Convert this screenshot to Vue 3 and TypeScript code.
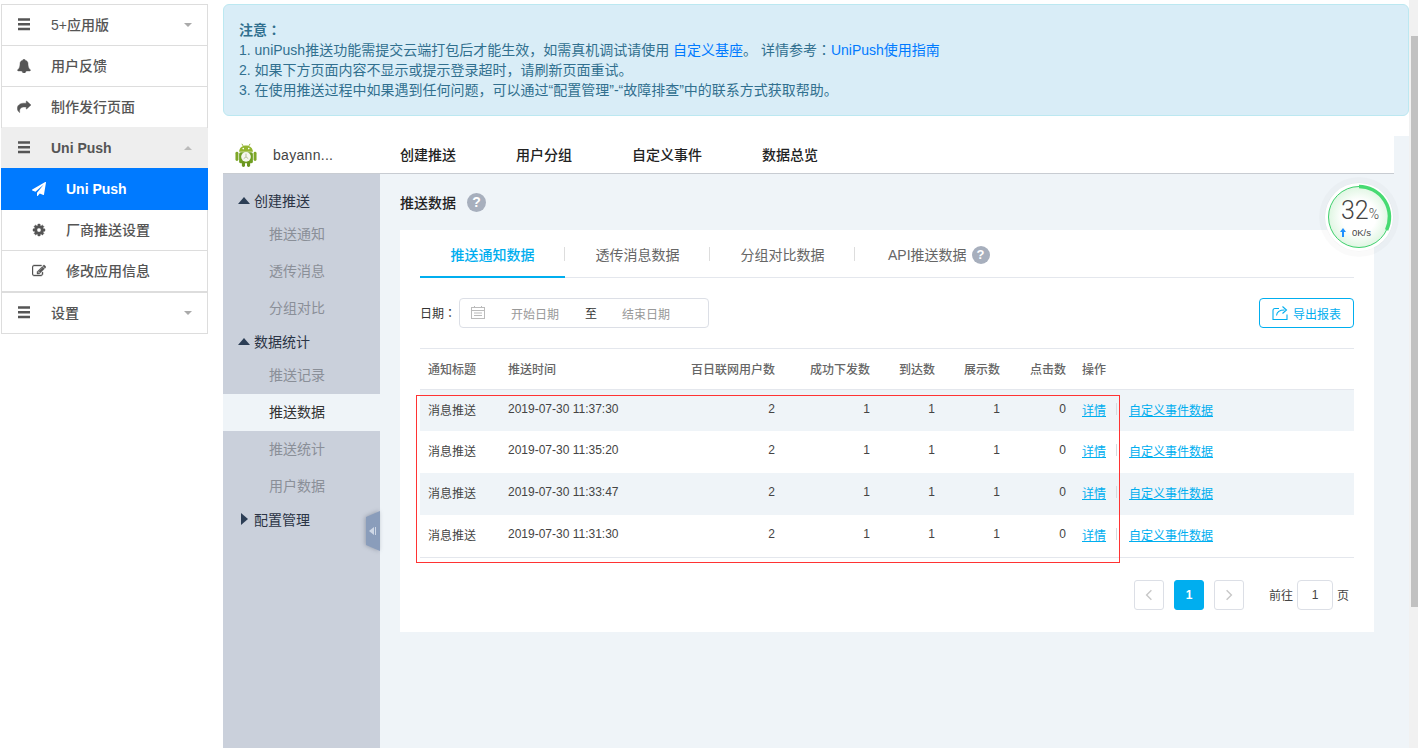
<script setup lang="ts">
const P = {
  bars: 'M128 26h1536v320h-1536zM128 627h1536v320h-1536zM128 1254h1536v320h-1536z',
  bell: 'M912 1696q0-16-16-16-59 0-101.500-42.500t-42.500-101.500q0-16-16-16t-16 16q0 73 51.500 124.500t124.500 51.500q16 0 16-16zm816-288q0 52-38 90t-90 38h-448q0 106-75 181t-181 75-181-75-75-181h-448q-52 0-90-38t-38-90q50-42 91-88t85-119.500 74.500-158.500 50-206 19.500-260q0-152 117-282.500t307-158.500q-8-19-8-39 0-40 28-68t68-28 68 28 28 68q0 20-8 39 190 28 307 158.500t117 282.500q0 139 19.500 260t50 206 74.500 158.500 85 119.500 91 88z',
  share: 'M1792 640L1240 140Q1180 100 1180 190V400H960C500 400 40 560 40 1100C40 1300 180 1480 300 1590C340 1620 370 1590 350 1550C290 1250 400 900 960 900H1180V1110Q1180 1190 1240 1150Z',
  send: 'M1764 11q33 24 27 64l-256 1536q-5 29-32 45-14 8-31 8-11 0-24-5l-453-185-242 295q-18 23-49 23-13 0-22-4-19-7-30.500-23.500t-11.500-36.500v-349l864-1059-1069 925-395-162q-37-14-40-55-2-40 32-59l1664-960q15-9 32-9 20 0 36 11z',
  cog: 'M1152 896q0-106-75-181t-181-75-181 75-75 181 75 181 181 75 181-75 75-181zm512-109v222q0 12-8 23t-20 13l-185 28q-19 54-39 91 35 50 107 138 10 12 10 25t-9 23q-27 37-99 108t-94 71q-12 0-26-9l-138-108q-44 23-91 38-16 136-29 186-7 28-36 28h-222q-14 0-24.500-8.500t-11.500-21.500l-28-184q-49-16-90-37l-141 107q-10 9-25 9-14 0-25-11-126-114-165-168-7-10-7-23 0-12 8-23 15-21 51-66.500t54-70.500q-27-50-41-99l-183-27q-13-2-21-12.500t-8-23.500v-222q0-12 8-23t19-13l186-28q14-46 39-92-40-57-107-138-10-12-10-24 0-10 9-23 26-36 98.500-107.500t94.500-71.500q13 0 26 10l138 107q44-23 91-38 16-136 29-186 7-28 36-28h222q14 0 24.500 8.500t11.500 21.500l28 184q49 16 90 37l142-107q9-9 24-9 13 0 25 10 129 119 165 170 7 8 7 22 0 12-8 23-15 21-51 66.500t-54 70.500q26 50 41 98l183 28q13 2 21 12.500t8 23.500z',
  edit: 'M888 1184l116-116-152-152-116 116v56h96v96h56zm440-720q-16-16-33 1l-350 350q-17 17-1 33t33-1l350-350q17-17 1-33zm80 594v190q0 119-84.500 203.500t-203.500 84.500h-832q-119 0-203.500-84.500t-84.500-203.500v-832q0-119 84.500-203.500t203.500-84.500h832q63 0 117 25 15 7 18 23 3 17-9 29l-49 49q-14 14-32 8-23-6-45-6h-832q-66 0-113 47t-47 113v832q0 66 47 113t113 47h832q66 0 113-47t47-113v-126q0-13 9-22l64-64q15-15 35-9t20 29zm-96-738l288 288-672 672h-288v-288zm444 132l-92 92-288-288 92-92q28-28 68-28t68 28l152 152q28 28 28 68t-28 68z'
}

interface Item { label: string; icon: string; sub?: boolean; caret?: 'up' | 'down'; cls?: string }
const menu: Item[] = [
  { label: '5+应用版', icon: P.bars, caret: 'down' },
  { label: '用户反馈', icon: P.bell },
  { label: '制作发行页面', icon: P.share, cls: 'before-open' },
  { label: 'Uni Push', icon: P.bars, caret: 'up', cls: 'open' },
  { label: 'Uni Push', icon: P.send, sub: true, cls: 'current' },
  { label: '厂商推送设置', icon: P.cog, sub: true },
  { label: '修改应用信息', icon: P.edit, sub: true },
  { label: '设置', icon: P.bars, caret: 'down', cls: 'last' }
]

const strokeFor = (d: string): number => (d === P.bars || d === P.send ? 0 : 50)

const navGroups = [
  { title: '创建推送', open: true, items: ['推送通知', '透传消息', '分组对比'] },
  { title: '数据统计', open: true, items: ['推送记录', '推送数据', '推送统计', '用户数据'] },
  { title: '配置管理', open: false, items: [] as string[] }
]

const topNav = ['创建推送', '用户分组', '自定义事件', '数据总览']
const tabs = ['推送通知数据', '透传消息数据', '分组对比数据']
const times = ['2019-07-30 11:37:30', '2019-07-30 11:35:20', '2019-07-30 11:33:47', '2019-07-30 11:31:30']
</script>

<template>
  <div class="page">
    <aside class="side">
      <div v-for="m in menu" :key="m.label + m.icon.length" class="row" :class="[m.cls, { sub: m.sub }]">
        <svg class="ico" viewBox="0 0 1792 1792"><path :d="m.icon" fill="currentColor" stroke="currentColor" :stroke-width="strokeFor(m.icon)" /></svg>
        <span class="row-label">{{ m.label }}</span>
        <i v-if="m.caret" class="caret" :class="m.caret"></i>
      </div>
    </aside>

    <main class="main">
      <section class="notice">
        <div class="notice-title">注意<span class="colon">：</span></div>
        <div>1. uniPush推送功能需提交云端打包后才能生效，如需真机调试请使用 <a class="nlink">自定义基座</a>。 详情参考<span class="colon">：</span><a class="nlink">UniPush使用指南</a></div>
        <div>2. 如果下方页面内容不显示或提示登录超时，请刷新页面重试。</div>
        <div>3. 在使用推送过程中如果遇到任何问题，可以通过“配置管理”-“故障排查”中的联系方式获取帮助。</div>
      </section>

      <section class="frame">
        <header class="top">
          <svg class="droid" viewBox="0 0 24 26">
            <line x1="7.500" y1="0.800" x2="9.500" y2="4" stroke="#8fb02f" stroke-width="1" />
            <line x1="16.500" y1="0.800" x2="14.500" y2="4" stroke="#8fb02f" stroke-width="1" />
            <path d="M4.500 9.500C4.500 5 8 2.500 12 2.500S19.500 5 19.500 9.500Z" fill="#93b52f" />
            <circle cx="9" cy="6" r="0.900" fill="#fff" /><circle cx="15" cy="6" r="0.900" fill="#fff" />
            <rect x="4.500" y="10" width="15" height="12" rx="2" fill="#6f9f22" />
            <rect x="0.500" y="9.500" width="3.200" height="10" rx="1.600" fill="#7fa728" />
            <rect x="20.300" y="9.500" width="3.200" height="10" rx="1.600" fill="#7fa728" />
            <rect x="7.500" y="20" width="3.400" height="6" rx="1.600" fill="#6b9520" />
            <rect x="13.100" y="20" width="3.400" height="6" rx="1.600" fill="#6b9520" />
            <circle cx="12" cy="15" r="5.300" fill="#f5f6ee" />
            <path d="M12 11.500V15L9.500 17M12 15L14.500 17" stroke="#a8b58a" stroke-width="0.900" fill="none" />
          </svg>
          <span class="appname">bayann...</span>
          <nav class="topnav"><a v-for="t in topNav" :key="t">{{ t }}</a></nav>
        </header>

        <div class="split">
          <nav class="leftnav">
            <template v-for="g in navGroups" :key="g.title">
              <div class="group"><i class="tri" :class="g.open ? 'tri-up' : 'tri-right'"></i>{{ g.title }}</div>
              <div v-for="it in g.items" :key="it" class="child" :class="{ active: it === '推送数据' }">{{ it }}</div>
            </template>
            <div class="handle"><div class="handle-shape"><i></i><b></b></div></div>
          </nav>

          <div class="content">
            <h2 class="title">推送数据<span class="help big">?</span></h2>
            <div class="card">
              <div class="tabs">
                <div v-for="(t, i) in tabs" :key="t" class="tab" :class="{ on: i === 0 }">{{ t }}</div>
                <div class="tab api">API推送数据<span class="help">?</span></div>
              </div>

              <div class="filter">
                <span class="flabel">日期<span class="colon">：</span></span>
                <div class="range">
                  <svg class="cal" viewBox="0 0 14 13" fill="none" stroke="#bbb">
                    <rect x="0.500" y="1.500" width="13" height="11" />
                    <path d="M0.500 4.500H13.500M3 7H11M3 9.500H11M3.500 0V2M10.500 0V2" />
                  </svg>
                  <span class="ph ph1">开始日期</span>
                  <span class="to">至</span>
                  <span class="ph ph2">结束日期</span>
                </div>
                <button class="export">
                  <svg viewBox="0 0 17 16" width="17" height="16" fill="none" stroke="#00aeef" stroke-width="1.100">
                    <path d="M7 3.500H3C1.800 3.500 1 4.300 1 5.500V14.500H15V9.500" />
                    <path d="M4.500 10.500C5 6.500 8 5 12.500 5M10.500 1.500L14.500 5L10.500 8.500" />
                  </svg>
                  <span>导出报表</span>
                </button>
              </div>

              <div class="tablewrap">
                <table class="grid">
                  <colgroup>
                    <col class="c1" /><col class="c2" /><col class="c3" />
                    <col class="c4" /><col class="c5" /><col class="c5" />
                    <col class="c7" /><col />
                  </colgroup>
                  <thead>
                    <tr>
                      <th>通知标题</th><th>推送时间</th><th class="r">百日联网用户数</th><th class="r">成功下发数</th>
                      <th class="r">到达数</th><th class="r">展示数</th><th class="r">点击数</th><th>操作</th>
                    </tr>
                  </thead>
                  <tbody>
                    <tr v-for="t in times" :key="t">
                      <td>消息推送</td><td>{{ t }}</td><td class="r">2</td><td class="r">1</td>
                      <td class="r">1</td><td class="r">1</td><td class="r">0</td>
                      <td><div class="ops"><a class="tl">详情</a><i class="sep"></i><a class="tl">自定义事件数据</a></div></td>
                    </tr>
                  </tbody>
                </table>
                <div class="redbox"></div>
              </div>

              <div class="pager">
                <button class="pbtn"><svg viewBox="0 0 10 14" width="8" height="12" fill="none" stroke="#c8c8c8" stroke-width="1.800"><path d="M8 1L2 7L8 13" /></svg></button>
                <button class="pbtn cur">1</button>
                <button class="pbtn"><svg viewBox="0 0 10 14" width="8" height="12" fill="none" stroke="#c8c8c8" stroke-width="1.800"><path d="M2 1L8 7L2 13" /></svg></button>
                <span class="goto">前往</span>
                <span class="pinput">1</span>
                <span class="goend">页</span>
              </div>
            </div>
          </div>
        </div>

        <div class="gauge">
          <svg viewBox="0 0 80 80" width="80" height="80">
            <defs>
              <radialGradient id="gfill" cx="50%" cy="50%" r="50%">
                <stop offset="55%" stop-color="#ffffff" />
                <stop offset="100%" stop-color="#dff6e2" />
              </radialGradient>
            </defs>
            <circle cx="40" cy="40" r="40" fill="#000" fill-opacity="0.018" />
            <circle cx="40" cy="40" r="34.500" fill="#000" fill-opacity="0.03" />
            <circle cx="40" cy="40" r="34" fill="#fff" />
            <circle cx="40" cy="40" r="30.500" fill="url(#gfill)" stroke="#3dd06c" stroke-width="1" />
            <path d="M40 9.500A30.500 30.500 0 0 1 67.600 52.900" fill="none" stroke="#47da72" stroke-width="3.500" />
          </svg>
          <div class="g-num">32<small>%</small></div>
          <div class="g-speed"><svg viewBox="0 0 6 9" width="6" height="9"><path d="M3 0L6 4H4V9H2V4H0Z" fill="#1e90ff" /></svg><span>0K/s</span></div>
        </div>
      </section>
    </main>

    <div class="scroll"><div class="thumb"></div></div>
  </div>
</template>

<style>
html, body { margin: 0; background: #fff; overflow: hidden; }
</style>

<style scoped>
.page {
  position: relative; display: flex; width: 1418px; height: 748px; overflow: hidden; background: #fff;
  font-family: "Liberation Sans", "Noto Sans CJK SC", sans-serif; color: #333;
}
a { cursor: pointer; }
.colon { font-family: "Noto Sans CJK TC", sans-serif; line-height: 0; }
.side {
  box-sizing: border-box; width: 207px; height: 330px; margin: 4px 0 0 1px;
  border: 1px solid #ddd; flex: none;
}
.row {
  box-sizing: border-box; display: flex; align-items: center; height: 41px; padding-left: 15px;
  border-bottom: 1px solid #ddd; color: #555; font-size: 14px; font-weight: 500; position: relative;
}
.row-label { padding-bottom: 2px; }
.row.sub { padding-left: 30px; }
.ico { width: 14px; height: 14px; flex: none; margin-right: 20px; color: #555; }
.row.before-open { border-bottom-color: #eee; }
.row.open { height: 40px; background: #eee; border-bottom: 0; margin: 0 -1px; padding-left: 16px; font-weight: 700; }
.row.current { height: 42px; background: #007aff; color: #fff; border-bottom: 0; margin: 0 -1px; padding-left: 31px; font-weight: 700; }
.row.open .row-label, .row.current .row-label { padding-bottom: 0; }
.row.current .ico { color: #fff; }
.row.last { height: 41px; border-top: 1px solid #ddd; border-bottom: 0; }
.caret { position: absolute; right: 15px; top: 50%; margin-top: -2px; width: 0; height: 0; border-left: 4px solid transparent; border-right: 4px solid transparent; }
.caret.down { border-top: 4px solid #aaa; }
.caret.up { border-bottom: 4px solid #bbb; right: 16px; }

.main { flex: none; width: 1186px; margin-left: 15px; padding-top: 4px; }
.notice {
  box-sizing: border-box; height: 112px; padding: 15px 15px 17px; border: 1px solid #bce8f1; border-radius: 6px;
  background: #d9edf7; color: #31708f; font-size: 14px; line-height: 20px;
}
.notice-title { font-weight: 700; }
.nlink { color: #007aff; }

.frame { position: relative; margin-top: 20px; background: #eff4f8; height: 612px; }
.top {
  box-sizing: border-box; display: flex; align-items: center; width: 1171px; height: 38px; background: #fff;
  border-bottom: 1px solid #c8ccd2;
}
.droid { width: 22px; height: 24px; margin-left: 12px; flex: none; }
.appname { width: 127px; margin-left: 16px; flex: none; font-size: 14px; letter-spacing: 0.3px; color: #444; }
.topnav { display: flex; gap: 60px; padding-bottom: 2px; font-size: 14px; font-weight: 500; color: #222; }

.split { display: flex; height: 574px; }
.leftnav { position: relative; box-sizing: border-box; flex: none; width: 157px; padding-top: 12px; background: #cad0db; font-size: 14px; }
.group { display: flex; align-items: center; box-sizing: border-box; height: 30px; padding: 0 0 2px 15px; color: #2b3445; }
.tri { display: block; width: 0; height: 0; margin-right: 4px; }
.tri-up { border-left: 6px solid transparent; border-right: 6px solid transparent; border-bottom: 7px solid #2c3e55; }
.tri-right { margin-left: 3px; margin-right: 6px; border-top: 6px solid transparent; border-bottom: 6px solid transparent; border-left: 7px solid #2c3e55; }
.child { height: 37px; line-height: 37px; padding-left: 46px; color: #8a8f98; }
.child.active { background: #eff4f8; color: #333; }
.handle { position: absolute; right: 0; top: 337px; width: 14px; height: 40px; filter: drop-shadow(-1px 0 2px rgba(60, 70, 90, 0.35)); }
.handle-shape { position: relative; width: 14px; height: 40px; background: #8a9dbb; clip-path: polygon(100% 0, 0 6px, 0 34px, 100% 100%); }
.handle-shape i { position: absolute; left: 3px; top: 16px; width: 0; height: 0; border-top: 4px solid transparent; border-bottom: 4px solid transparent; border-right: 5px solid #cfd8e6; }
.handle-shape b { position: absolute; left: 9px; top: 16px; width: 1px; height: 8px; background: #cfd8e6; }

.content { flex: 1; min-width: 0; padding: 0 35px 0 20px; }
.title { display: flex; align-items: center; height: 56px; margin: 0; font-size: 14px; font-weight: 500; color: #222; }
.help {
  display: inline-flex; align-items: center; justify-content: center; width: 18px; height: 18px; margin-left: 5px;
  border-radius: 50%; background: #a7afbd; color: #fff; font-size: 13px; font-weight: 700;
}
.help.big { width: 19px; height: 19px; margin-left: 11px; font-size: 14px; }
.card { box-sizing: border-box; width: 974px; height: 402px; padding: 8px 20px 22px; background: #fff; }
.tabs { display: flex; height: 40px; border-bottom: 1px solid #e4e7ed; box-sizing: border-box; font-size: 14px; color: #666; }
.tab { position: relative; box-sizing: border-box; width: 145px; height: 40px; line-height: 34px; text-align: center; }
.tab::after { content: ""; position: absolute; right: 0; top: 9px; width: 1px; height: 14px; background: #ddd; }
.tab.on { color: #00aeef; font-weight: 500; }
.tab.on::before { content: ""; position: absolute; left: 0; right: 0; bottom: 0; height: 2px; background: #00aeef; }
.tab.api { display: flex; align-items: center; height: 34px; width: auto; padding-left: 33px; }
.tab.api::after { display: none; }

.filter { display: flex; align-items: center; margin-top: 20px; height: 30px; font-size: 12px; }
.flabel { width: 39px; padding-bottom: 2px; color: #333; }
.range {
  position: relative; box-sizing: border-box; display: flex; align-items: center; width: 250px; height: 30px;
  border: 1px solid #dcdfe6; border-radius: 4px;
}
.cal { position: absolute; left: 11px; top: 7px; width: 14px; height: 13px; }
.ph { color: #999; }
.ph1 { margin-left: 51px; }
.to { margin-left: 26px; padding-bottom: 1px; color: #333; }
.ph2 { margin-left: 25px; }
.export {
  box-sizing: border-box; display: flex; align-items: center; gap: 4px; width: 95px; height: 30px; margin-left: auto; padding: 0 0 0 12px;
  background: #fff; border: 1px solid #00aeef; border-radius: 4px; color: #00aeef; font: inherit;
}

.tablewrap { position: relative; margin-top: 20px; }
.grid { width: 934px; table-layout: fixed; border-collapse: collapse; font-size: 12px; border-top: 1px solid #e4e7ed; border-bottom: 1px solid #e4e7ed; }
.c1 { width: 80px; } .c2 { width: 150px; } .c3 { width: 133px; } .c4 { width: 95px; } .c5 { width: 65px; } .c7 { width: 66px; }
.grid th, .grid td { padding: 0 8px; text-align: left; white-space: nowrap; font-weight: 400; }
.grid th { height: 41px; padding-bottom: 1px; box-sizing: border-box; color: #666; font-weight: 500; border-bottom: 1px solid #e4e7ed; }
.grid td { box-sizing: border-box; height: 42px; padding-bottom: 3px; color: #444; }
.grid tbody tr:first-child td { height: 41px; padding-bottom: 2px; }
.grid tbody tr:last-child td { height: 43px; padding-bottom: 3px; }
.grid tbody tr:nth-child(odd) { background: #eff4f8; }
.grid .r { text-align: right; }
.ops { display: flex; align-items: center; height: 20px; }
.tl { color: #00aeef; text-decoration: underline; }
.sep { width: 1px; height: 12px; margin: 0 12px 0 10px; background: #d8dbe0; }
.redbox { position: absolute; left: -4px; top: 47px; width: 704px; height: 168px; box-sizing: border-box; border: 1px solid #f33; pointer-events: none; }

.pager { display: flex; align-items: center; margin-top: 22px; height: 30px; font-size: 12px; color: #444; }
.pbtn {
  box-sizing: border-box; display: flex; align-items: center; justify-content: center; width: 30px; height: 30px; margin-right: 10px; padding: 0;
  background: #fff; border: 1px solid #dcdfe6; border-radius: 3px; font: inherit;
}
.pbtn:first-child { margin-left: 714px; }
.pbtn.cur { background: #00aeef; border-color: #00aeef; color: #fff; font-weight: 700; }
.goto { margin-left: 15px; padding-bottom: 1px; }
.goend { padding-bottom: 1px; }
.pinput {
  box-sizing: border-box; width: 36px; height: 30px; margin: 0 4px; line-height: 28px; text-align: center;
  border: 1px solid #dcdfe6; border-radius: 4px;
}

.gauge { position: absolute; left: 1096px; top: 41px; width: 80px; height: 80px; }
.gauge > svg { display: block; }
.g-num { position: absolute; left: 22px; top: 20px; font-family: Roboto, "Liberation Sans", sans-serif; font-weight: 300; font-size: 25px; line-height: 28px; color: #444; }
.g-num small { font-size: 14px; }
.g-speed { position: absolute; left: 21px; top: 50px; display: flex; align-items: center; gap: 6px; font-size: 9.5px; line-height: 11px; color: #444; }

.scroll { position: absolute; right: 0; top: 0; bottom: 0; width: 9px; background: #f1f1f1; }
.thumb { position: absolute; right: 0; top: 36px; width: 7px; height: 571px; background: #c1c1c1; }
</style>
